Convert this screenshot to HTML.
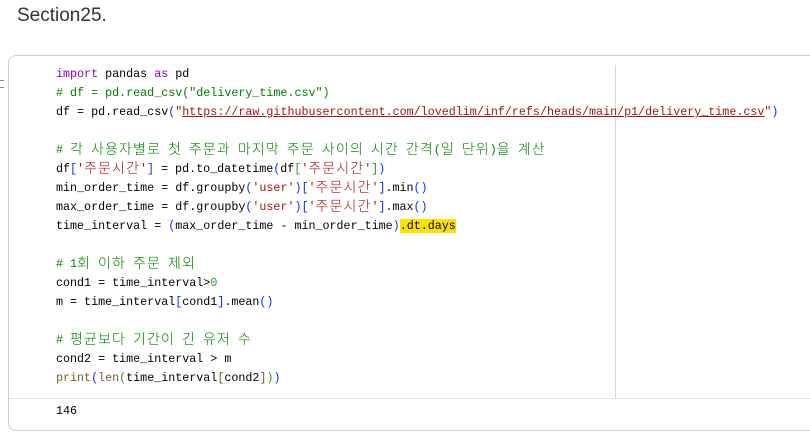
<!DOCTYPE html>
<html><head><meta charset="utf-8"><style>
body{margin:0;width:810px;height:439px;background:#fff;overflow:hidden;position:relative;font-family:"Liberation Sans",sans-serif}
.title{position:absolute;left:17px;top:5px;font-size:19px;color:#333}
.card{position:absolute;left:8px;top:55px;width:830px;height:374px;border:1px solid #d0d0d0;border-radius:8px}
.ruler{position:absolute;left:615px;top:65px;width:1px;height:333px;background:#d6d6d6}
.sep{position:absolute;left:9px;top:398px;width:801px;height:1px;background:#e4e4e4}
.code{position:absolute;left:56px;top:65px;margin:0;font-family:"Liberation Mono",monospace;font-size:11.7px;color:#000}
.code div{height:19px;line-height:19px;white-space:pre;overflow:visible}
.h{font-family:"Noto Sans CJK KR",sans-serif;font-size:14px;line-height:0;letter-spacing:1.1px;font-weight:300;position:relative;top:1px}
.out{position:absolute;left:56px;top:404px;font-family:"Liberation Mono",monospace;font-size:11.7px;color:#000}
.k{color:#8b00c9}.c{color:#008000}.s{color:#a31515}.u{color:#a31515;text-decoration:underline}.b{color:#0431fa}.g{color:#319331}.f{color:#795e26}.y{background:#ffe100}
.dots{position:absolute;left:0;top:80px;width:4px;height:6px;border-top:1px solid #888;border-bottom:1px solid #888}
</style></head><body>
<div class="title">Section25.</div>
<div class="card"></div>
<div class="dots"></div>
<div class="ruler"></div>
<div class="sep"></div>
<div class="code">
<div><span class="k">import</span> pandas <span class="k">as</span> pd</div>
<div><span class="c"># df = pd.read_csv("delivery_time.csv")</span></div>
<div>df = pd.read_csv<span class="b">(</span><span class="s">"</span><span class="u">https://raw.githubusercontent.com/lovedlim/inf/refs/heads/main/p1/delivery_time.csv</span><span class="s">"</span><span class="b">)</span></div>
<div> </div>
<div><span class="c"># <span class="h">각</span> <span class="h">사용자별로</span> <span class="h">첫</span> <span class="h">주문과</span> <span class="h">마지막</span> <span class="h">주문</span> <span class="h">사이의</span> <span class="h">시간</span> <span class="h">간격</span>(<span class="h">일</span> <span class="h">단위</span>)<span class="h">을</span> <span class="h">계산</span></span></div>
<div>df<span class="b">[</span><span class="s">'<span class="h">주문시간</span>'</span><span class="b">]</span> = pd.to_datetime<span class="b">(</span>df<span class="g">[</span><span class="s">'<span class="h">주문시간</span>'</span><span class="g">]</span><span class="b">)</span></div>
<div>min_order_time = df.groupby<span class="b">(</span><span class="s">'user'</span><span class="b">)[</span><span class="s">'<span class="h">주문시간</span>'</span><span class="b">]</span>.min<span class="b">()</span></div>
<div>max_order_time = df.groupby<span class="b">(</span><span class="s">'user'</span><span class="b">)[</span><span class="s">'<span class="h">주문시간</span>'</span><span class="b">]</span>.max<span class="b">()</span></div>
<div>time_interval = <span class="b">(</span>max_order_time - min_order_time<span class="b">)</span><span class="y">.dt.days</span></div>
<div> </div>
<div><span class="c"># 1<span class="h">회</span> <span class="h">이하</span> <span class="h">주문</span> <span class="h">제외</span></span></div>
<div>cond1 = time_interval&gt;<span class="g">0</span></div>
<div>m = time_interval<span class="b">[</span>cond1<span class="b">]</span>.mean<span class="b">()</span></div>
<div> </div>
<div><span class="c"># <span class="h">평균보다</span> <span class="h">기간이</span> <span class="h">긴</span> <span class="h">유저</span> <span class="h">수</span></span></div>
<div>cond2 = time_interval &gt; m</div>
<div><span class="f">print</span><span class="b">(</span><span class="f">len</span><span class="g">(</span>time_interval<span class="f">[</span>cond2<span class="f">]</span><span class="g">)</span><span class="b">)</span></div>
</div>
<div class="out">146</div>
</body></html>
